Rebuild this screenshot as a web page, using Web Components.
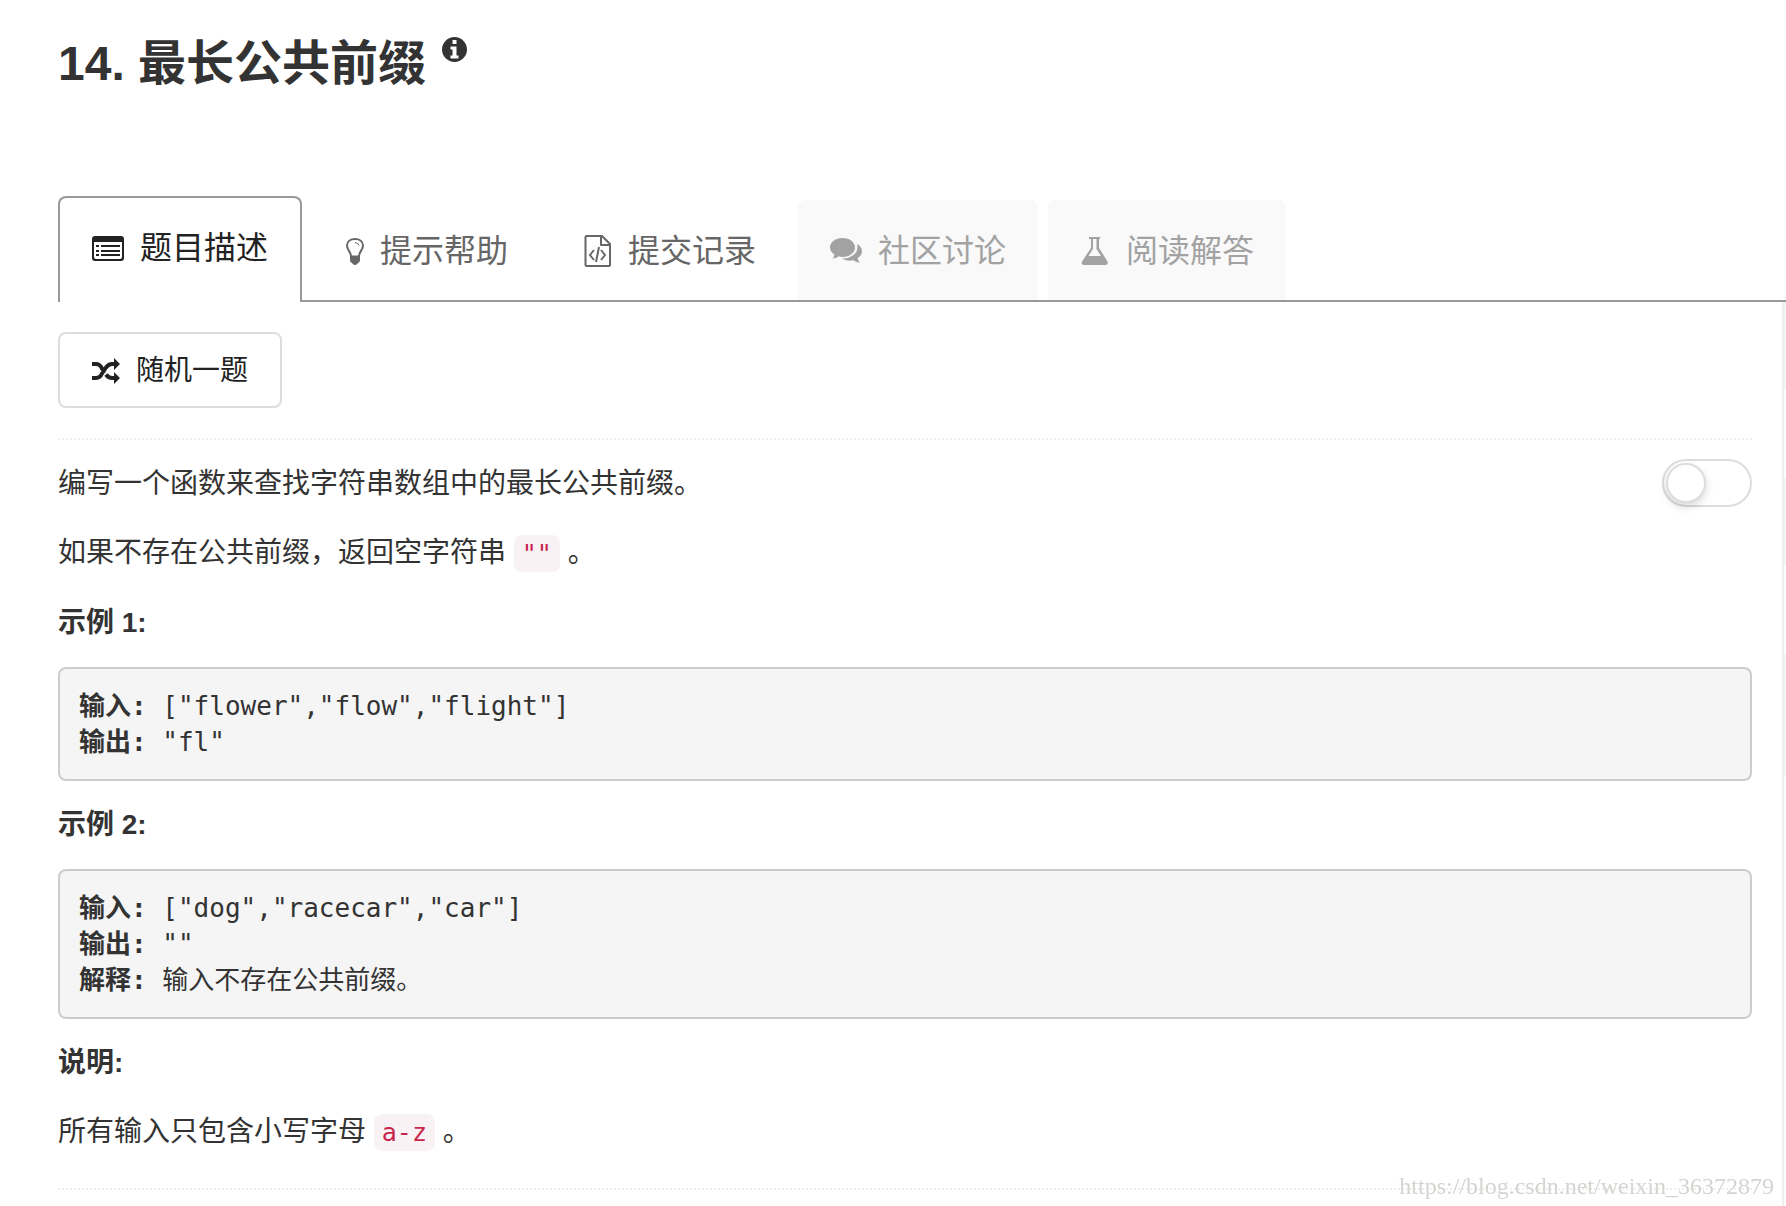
<!DOCTYPE html>
<html lang="zh-CN">
<head>
<meta charset="utf-8">
<meta name="viewport" content="width=device-width, initial-scale=1">
<title>14. 最长公共前缀</title>
<style>
	body {
		margin: 0;

		background: #ffffff;

		color: #333333;
		font-family: "Liberation Sans", "Noto Sans CJK SC", sans-serif;
		font-size: 28px;
		line-height: 50px;
	}
</style>
</head>
<body>

<problem-page>
	<problem-title slot="title" number="14">最长公共前缀</problem-title>

	<tab-bar slot="tabs">
		<tab-item icon="list" active>题目描述</tab-item>
		<tab-item icon="bulb">提示帮助</tab-item>
		<tab-item icon="code">提交记录</tab-item>
		<tab-item icon="comments" disabled>社区讨论</tab-item>
		<tab-item icon="flask" disabled>阅读解答</tab-item>
	</tab-bar>

	<icon-button icon="random">随机一题</icon-button>
	<dotted-rule></dotted-rule>

	<problem-text>
		<toggle-switch slot="aside" label="切换语言"></toggle-switch>
		编写一个函数来查找字符串数组中的最长公共前缀。
	</problem-text>
	<problem-text>如果不存在公共前缀，返回空字符串 <inline-code>""</inline-code>。</problem-text>

	<problem-text strong>示例 1:</problem-text>
	<code-block><b>输入:</b> ["flower","flow","flight"]
<b>输出:</b> "fl"</code-block>

	<problem-text strong>示例 2:</problem-text>
	<code-block><b>输入:</b> ["dog","racecar","car"]
<b>输出:</b> ""
<b>解释:</b> 输入不存在公共前缀。</code-block>

	<problem-text strong>说明:</problem-text>
	<problem-text>所有输入只包含小写字母 <inline-code>a-z</inline-code> 。</problem-text>
	<dotted-rule></dotted-rule>

	<water-mark slot="overlay">https://blog.csdn.net/weixin_36372879</water-mark>
</problem-page>

<script>
const icons = {
	info: {
		width: 25,
		height: 25,
		content: '<path fill-rule="evenodd" d="M12.500 0a12.500 12.500 0 1 0 0 25a12.500 12.500 0 0 0 0-25zM10.500 3h4v4h-4zM8.500 9.500h6v9h2v3h-8v-3h2v-6h-2z"/>',
	},
	list: {
		width: 32,
		height: 25,
		content: '<path fill-rule="evenodd" d="M3 0h26a3 3 0 0 1 3 3v19a3 3 0 0 1-3 3H3a3 3 0 0 1-3-3V3a3 3 0 0 1 3-3zM2 6v15q0 2 2 2h24q2 0 2-2V6z"/><path d="M4 9h3v2H4zM9 9h19v2H9zM4 14h3v2H4zM9 14h19v2H9zM4 18h3v2H4zM9 18h19v2H9z"/>',
	},
	bulb: {
		width: 20,
		height: 28,
		content: '<path d="M7 19C6.500 14 3 13 3 8.500C3 4.500 6.500 2 11 2s8 2.500 8 6.500C19 13 15.500 14 15 19" fill="none" stroke="currentColor" stroke-width="2"/><path d="M11 5.500q3.500.3 4 3" fill="none" stroke="currentColor"/><path d="M6 18.500h10v5q0 1.500-2 2.500q-1 2-3 2t-3-2q-2-1-2-2.500z"/>',
	},
	code: {
		width: 30,
		height: 32,
		content: '<path d="M4.500 1H20l8 8v21q0 1-1 1H4.500q-1 0-1-1V2q0-1 1-1zM19 1v9h9" fill="none" stroke="currentColor" stroke-width="2" stroke-linejoin="round"/><path d="M12 15l-4 5l4 5M19 15l4 5l-4 5M17 12l-3 15" fill="none" stroke="currentColor" stroke-width="2"/>',
	},
	comments: {
		width: 32,
		height: 26,
		content: '<path d="M12.500 0C5.500 0 0 4 0 9.500c0 3 2 5.500 4.500 7.200Q4 19 2.500 20.500Q6 20.500 9 18.300Q10.500 19 12.500 19C19.500 19 25 14.800 25 9.500S19.500 0 12.500 0z"/><path d="M27 6c3 1.500 5 4.200 5 7.200c0 2.800-1.700 5.300-4.400 6.900Q28 23 30 24.600Q26.500 24.700 23.400 22.300Q16 23.500 11.800 20.500C20 21 27.500 16 27.500 9.500Q27.500 7.600 27 6z"/>',
	},
	flask: {
		width: 30,
		height: 28,
		content: '<path d="M9 0h11v2h-1v9l8.500 13.500Q28.500 28 25.500 28H4Q.5 28 2 24.500L11 11V2H9zM13 2v10l-4.500 7h12.500l-4.500-7V2z" fill-rule="evenodd"/>',
	},
	random: {
		width: 28,
		height: 26,
		content: '<path d="M0 6h4q4 0 6 4.500l2.500 4.500M0 20h4q4 0 6-4.500l4-6q2.500-3.500 6-3.500h3M14 16.500q2.500 3.500 6 3.500h3" fill="none" stroke="currentColor" stroke-width="4"/><path d="M22 0l6 6l-6 6zM22 14l6 6l-6 6z"/>',
	},
};

/**
 * Builds the svg markup for one of the icons above
 */
function icon(name) {
	const { width, height, content } = icons[name];

	return `<svg width="${width}" height="${height}" viewBox="0 0 ${width} ${height}" fill="currentColor" aria-hidden="true">${content}</svg>`;
}

class BaseElement extends HTMLElement {

	constructor() {
		super();

		this.attachShadow({ mode: 'open' });
	}

	connectedCallback() {
		this.shadowRoot.innerHTML = this.render();
	}

}

class ProblemPage extends BaseElement {

	render() {
		return `
			<style>
				:host {
					display: flex;
					flex-direction: column;
					min-height: 100vh;
				}

				header {
					padding: 32px 58px 0;
					margin-bottom: 100px;
				}

				.body {
					display: flex;
					flex: 1;
				}

				main {
					flex: 1;
					min-width: 0;
					padding: 30px 30px 0 58px;
					border-right: 2px solid #ecf1f0;
				}

				/* Edge of the editor next to the description */
				.editor {
					width: 2px;
					background: linear-gradient(
						#f5f5f5 88px, #ffffff 88px 176px,
						#f5f5f5 176px 264px, #ffffff 264px 352px,
						#f5f5f5 352px 474px, #ffffff 474px
					);
				}
			</style>
			<header><slot name="title"></slot></header>
			<slot name="tabs"></slot>
			<div class="body">
				<main><slot></slot></main>
				<div class="editor"></div>
			</div>
			<slot name="overlay"></slot>
		`;
	}

}

class ProblemTitle extends BaseElement {

	render() {
		return `
			<style>
				:host {
					display: block;
				}

				h1 {
					display: flex;
					align-items: flex-start;
					gap: 16px;

					margin: 0;

					font-weight: bold;
					font-size: 48px;
					line-height: 64px;
				}

				svg {
					margin-top: 5px;
				}
			</style>
			<h1><span>${this.getAttribute('number')}. <slot></slot></span>${icon('info')}</h1>
		`;
	}

}

class TabBar extends BaseElement {

	render() {
		return `
			<style>
				:host {
					display: block;
				}

				nav {
					display: flex;
					align-items: flex-end;
					gap: 10px;

					margin-left: 58px;
					box-shadow: inset 0 -2px #999999;
				}
			</style>
			<nav><slot></slot></nav>
		`;
	}

}

class TabItem extends BaseElement {

	render() {
		return `
			<style>
				:host {
					display: block;
					margin-bottom: 2px;

					color: #666666;
				}

				:host([active]) {
					margin-bottom: 0;

					color: #222222;
				}

				:host([disabled]) {
					color: #a2a2a2;
				}

				a {
					display: flex;
					align-items: center;
					gap: 16px;

					height: 98px;
					padding: 2px 32px 0;
					border-radius: 8px 8px 0 0;

					color: inherit;
					font-size: 32px;
					text-decoration: none;
				}

				:host([active]) a {
					height: 100px;
					padding: 0 32px 4px;
					border: 2px solid #999999;
					border-bottom: 0;
					background: #ffffff;
				}

				:host([disabled]) a {
					background: #f9f9f9;
				}
			</style>
			<a href="#">${icon(this.getAttribute('icon'))}<span><slot></slot></span></a>
		`;
	}

}

class IconButton extends BaseElement {

	render() {
		return `
			<style>
				:host {
					display: block;
				}

				button {
					display: flex;
					align-items: center;
					gap: 16px;

					height: 76px;
					padding: 2px 32px 0;

					background: #ffffff;
					border: 2px solid #dddddd;
					border-radius: 8px;
					cursor: pointer;

					color: #222222;
					font: inherit;
				}
			</style>
			<button type="button">${icon(this.getAttribute('icon'))}<span><slot></slot></span></button>
		`;
	}

}

class DottedRule extends BaseElement {

	render() {
		return `
			<style>
				:host {
					display: block;
					margin: 30px 0 19px;
				}

				hr {
					margin: 0;
					border: 0;
					border-top: 2px dotted #eeeeee;
				}
			</style>
			<hr>
		`;
	}

}

class ProblemText extends BaseElement {

	render() {
		return `
			<style>
				:host {
					display: flex;
					justify-content: space-between;

					margin-bottom: 19px;
				}

				:host([strong]) {
					font-weight: bold;
				}

				p {
					margin: 0;
				}
			</style>
			<p><slot></slot></p>
			<slot name="aside"></slot>
		`;
	}

}

class InlineCode extends BaseElement {

	render() {
		return `
			<style>
				:host {
					display: inline;
				}

				code {
					padding: 4px 8px;

					background: #f9f2f4;
					border-radius: 8px;

					color: #c7254e;
					font-family: "DejaVu Sans Mono", "Noto Sans CJK SC", monospace;
					font-size: 25px;
				}
			</style>
			<code><slot></slot></code>
		`;
	}

}

class CodeBlock extends BaseElement {

	render() {
		return `
			<style>
				:host {
					display: block;
					margin-bottom: 19px;
				}

				pre {
					margin: 0;
					padding: 19px;

					background: #f5f5f5;
					border: 2px solid #cccccc;
					border-radius: 8px;

					font-family: "DejaVu Sans Mono", "Noto Sans CJK SC", monospace;
					font-size: 26px;
					line-height: 36px;
					white-space: pre-wrap;
				}
			</style>
			<pre><slot></slot></pre>
		`;
	}

}

class ToggleSwitch extends BaseElement {

	render() {
		return `
			<style>
				:host {
					display: block;
				}

				input {
					display: block;
					width: 90px;
					height: 48px;
					margin: 0;
					padding: 2px;
					box-sizing: border-box;

					appearance: none;
					background: #ffffff;
					border: 2px solid #dddddd;
					border-radius: 24px;
					cursor: pointer;
				}

				input::before {
					content: '';

					display: block;
					width: 40px;
					height: 40px;
					box-sizing: border-box;

					background: #ffffff;
					border: 2px solid #dddddd;
					border-radius: 50%;
					box-shadow: 0 4px 8px rgba(0, 0, 0, 0.15);
				}

				input:checked::before {
					margin-left: auto;
				}
			</style>
			<input type="checkbox" role="switch" aria-label="${this.getAttribute('label')}">
		`;
	}

}

class WaterMark extends BaseElement {

	render() {
		return `
			<style>
				:host {
					position: fixed;
					right: 12px;
					bottom: 8px;

					color: #d4d4d0;
					font-family: "Liberation Serif", serif;
					font-size: 24px;
					line-height: 24px;
				}
			</style>
			<slot></slot>
		`;
	}

}

customElements.define('problem-page', ProblemPage);
customElements.define('problem-title', ProblemTitle);
customElements.define('tab-bar', TabBar);
customElements.define('tab-item', TabItem);
customElements.define('icon-button', IconButton);
customElements.define('dotted-rule', DottedRule);
customElements.define('problem-text', ProblemText);
customElements.define('inline-code', InlineCode);
customElements.define('code-block', CodeBlock);
customElements.define('toggle-switch', ToggleSwitch);
customElements.define('water-mark', WaterMark);
</script>
</body>
</html>
